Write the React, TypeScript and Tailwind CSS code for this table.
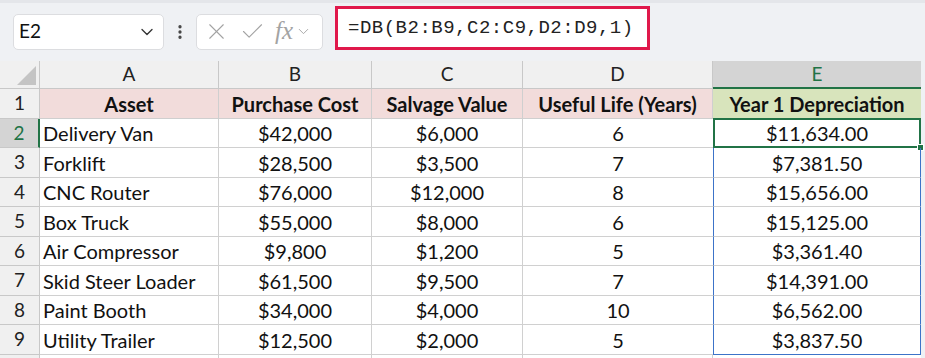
import { Check, ChevronDown, EllipsisVertical, X } from "lucide-react";

const rows = [
  ["Delivery Van", "$42,000", "$6,000", "6", "$11,634.00"],
  ["Forklift", "$28,500", "$3,500", "7", "$7,381.50"],
  ["CNC Router", "$76,000", "$12,000", "8", "$15,656.00"],
  ["Box Truck", "$55,000", "$8,000", "6", "$15,125.00"],
  ["Air Compressor", "$9,800", "$1,200", "5", "$3,361.40"],
  ["Skid Steer Loader", "$61,500", "$9,500", "7", "$14,391.00"],
  ["Paint Booth", "$34,000", "$4,000", "10", "$6,562.00"],
  ["Utility Trailer", "$12,500", "$2,000", "5", "$3,837.50"],
];

const heads = ["Asset", "Purchase Cost", "Salvage Value", "Useful Life (Years)"];
const rowHeights = ["h-[29px]", "h-[30px]", "h-[29px]", "h-[30px]", "h-[29px]", "h-[30px]", "h-[29px]", "h-[30px]"];

export default function App() {
  return (
    <div className="w-[925px] h-[358px] overflow-hidden bg-[#eff1f4] font-['Lato',sans-serif] text-[#111]">
      {/* Formula bar */}
      <div className="h-[61px] border-t-[3px] border-[#e4e6ea] flex items-center pl-[13px] pb-[1px]">
        <div className="w-[151px] h-[36px] bg-white rounded-[5px] border border-[#dcdde0] flex items-center justify-between pl-[5px] pr-[6px]">
          <span className="text-[19px]">E2</span>
          <ChevronDown size={20} strokeWidth={1.6} className="text-[#333]" />
        </div>
        <div className="w-[32px] flex justify-center">
          <EllipsisVertical size={18} strokeWidth={2.4} className="text-[#444]" />
        </div>
        <div className="w-[127px] h-[36px] bg-white rounded-[5px] border border-[#dcdde0] flex items-center pl-[6px] gap-[9px] text-[#a3a3a3]">
          <X size={27} strokeWidth={1} />
          <Check size={27} strokeWidth={1} />
          <span className="font-['Liberation_Serif',serif] italic text-[25px] leading-none -mt-[3px] flex items-center">
            fx
            <ChevronDown size={17} strokeWidth={1.3} className="ml-[2px] mt-[3px]" />
          </span>
        </div>
        <div className="ml-[12px] -mt-[7px] w-[315px] h-[44px] bg-white border-[3px] border-[#e0184b] flex items-center pl-[10px]">
          <span className="font-['Liberation_Mono',monospace] text-[19px] tracking-[0.5px] text-[#222]">
            =DB(B2:B9,C2:C9,D2:D9,1)
          </span>
        </div>
      </div>

      {/* Sheet */}
      <div className="grid grid-cols-[40px_179px_153px_151px_190px_208px] w-[921px] bg-white text-[20px]">
        {/* column letters */}
        <div className="h-[28px] bg-[#f0f0f0] border-r border-b border-[#c8c8c8] flex items-end justify-end p-[3px]">
          <div className="w-0 h-0 border-l-[19px] border-l-transparent border-b-[19px] border-b-[#c4c4c4]" />
        </div>
        {["A", "B", "C", "D"].map((c) => (
          <div key={c} className="h-[28px] bg-[#f0f0f0] border-r border-b border-[#c8c8c8] flex items-center justify-center text-[19px] text-[#222]">
            {c}
          </div>
        ))}
        <div className="h-[28px] bg-[#d4d4d4] border-b-2 border-[#217346] flex items-center justify-center text-[19px] text-[#217346]">
          E
        </div>

        {/* row 1 */}
        <div className="h-[30px] bg-[#f0f0f0] border-r border-b border-[#c8c8c8] flex items-center justify-center text-[19px] text-[#222]">
          1
        </div>
        {heads.map((h) => (
          <div key={h} className="h-[30px] bg-[#f2dcdb] border-r border-b border-[#cfcfcf] flex items-center justify-center font-bold">
            {h}
          </div>
        ))}
        <div className="h-[30px] bg-[#d8e4bc] border-b border-[#cfcfcf] flex items-center justify-center font-bold">
          Year 1 Depreciation
        </div>

        {rows.map((r, i) => {
          const h = rowHeights[i];
          const sel = i === 0;
          const last = i === rows.length - 1;
          return [
            <div
              key={`h${i}`}
              className={`${h} border-b border-[#c8c8c8] flex items-center justify-center text-[19px] ${
                sel
                  ? "bg-[#d4d4d4] text-[#217346] border-r-2 border-r-[#217346]"
                  : "bg-[#f0f0f0] text-[#222] border-r border-r-[#c8c8c8]"
              }`}
            >
              {i + 2}
            </div>,
            <div key={`a${i}`} className={`${h} border-r border-b border-[#d0d0d0] flex items-center pl-[3px]`}>
              {r[0]}
            </div>,
            <div key={`b${i}`} className={`${h} border-r border-b border-[#d0d0d0] flex items-center justify-center`}>
              {r[1]}
            </div>,
            <div key={`c${i}`} className={`${h} border-r border-b border-[#d0d0d0] flex items-center justify-center`}>
              {r[2]}
            </div>,
            <div key={`d${i}`} className={`${h} border-b border-[#d0d0d0] flex items-center justify-center`}>
              {r[3]}
            </div>,
            <div
              key={`e${i}`}
              className={`${h} relative border-x border-x-[#3c73c8] flex items-center justify-center ${
                last ? "border-b border-b-[#3c73c8]" : "border-b border-b-[#d0d0d0]"
              }`}
            >
              {r[4]}
              {sel && (
                <>
                  <div className="absolute -left-[1px] -top-[1px] -right-[1px] -bottom-[1px] border-2 border-[#217346]" />
                  <div className="absolute -right-[4px] -bottom-[4px] w-[7px] h-[7px] bg-[#217346] border border-white" />
                </>
              )}
            </div>,
          ];
        })}

        {/* partial next row */}
        <div className="h-[10px] bg-[#f0f0f0] border-r border-[#c8c8c8]" />
        <div className="h-[10px] border-r border-[#d0d0d0]" />
        <div className="h-[10px] border-r border-[#d0d0d0]" />
        <div className="h-[10px] border-r border-[#d0d0d0]" />
        <div className="h-[10px] border-r border-[#d0d0d0]" />
        <div className="h-[10px]" />
      </div>
    </div>
  );
}
